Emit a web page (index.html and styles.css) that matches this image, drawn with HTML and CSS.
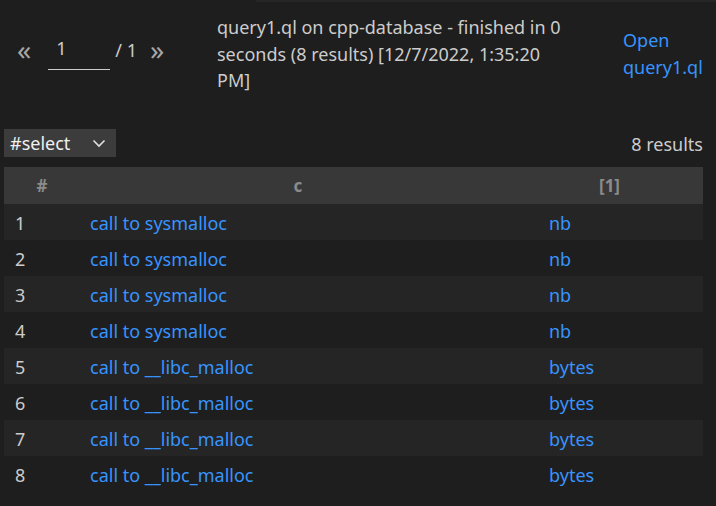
FILE: index.html
```html
<!DOCTYPE html>
<html>
<head>
<meta charset="utf-8">
<link rel="stylesheet" href="styles.css">
</head>
<body>
<div class="strip"></div>
<div class="top">
  <div class="pager">
    <span class="arrow">«</span>
    <span class="page-input">1</span>
    <span class="page-total">/ 1</span>
    <span class="arrow">»</span>
  </div>
  <div class="title">query1.ql on cpp-database - finished in 0 seconds (8 results) [12/7/2022, 1:35:20 PM]</div>
  <a class="open">Open query1.ql</a>
</div>
<div class="toolbar">
  <div class="select"><span>#select</span>
    <svg width="14" height="9" viewBox="0 0 14 9"><path d="M1.5 1.5 L7 7 L12.5 1.5" fill="none" stroke="#e0e0e0" stroke-width="1.6"/></svg>
  </div>
  <div class="count">8 results</div>
</div>
<div class="table">
  <div class="row head"><div>#</div><div>c</div><div>[1]</div></div>
  <div class="row odd"><div class="n">1</div><div class="l">call to sysmalloc</div><div class="r">nb</div></div>
  <div class="row"><div class="n">2</div><div class="l">call to sysmalloc</div><div class="r">nb</div></div>
  <div class="row odd"><div class="n">3</div><div class="l">call to sysmalloc</div><div class="r">nb</div></div>
  <div class="row"><div class="n">4</div><div class="l">call to sysmalloc</div><div class="r">nb</div></div>
  <div class="row odd"><div class="n">5</div><div class="l">call to __libc_malloc</div><div class="r">bytes</div></div>
  <div class="row"><div class="n">6</div><div class="l">call to __libc_malloc</div><div class="r">bytes</div></div>
  <div class="row odd"><div class="n">7</div><div class="l">call to __libc_malloc</div><div class="r">bytes</div></div>
  <div class="row"><div class="n">8</div><div class="l">call to __libc_malloc</div><div class="r">bytes</div></div>
</div>
</body>
</html>
```
FILE: styles.css
```css
html, body {
  margin: 0;
  padding: 0;
  background: #1e1e1e;
  color: #cccccc;
  font-family: "Noto Sans", "Open Sans", sans-serif;
  font-size: 18px;
}
.strip {
  height: 2px;
  margin-left: 256px;
  background: #262626;
}
.top {
  display: flex;
  align-items: flex-start;
  padding-top: 12px;
  height: 100px;
  box-sizing: content-box;
}
.pager {
  width: 200px;
  padding-left: 17px;
  display: flex;
  align-items: center;
  height: 72px;
}
.arrow {
  color: #a6a6a6;
  font-size: 28px;
  line-height: 28px;
  margin-top: -2px;
}
.page-input {
  width: 54px;
  margin-left: 17px;
  padding-left: 8px;
  padding-bottom: 10px;
  border-bottom: 1px solid #cccccc;
  line-height: 22px;
  margin-top: 23px;
  align-self: flex-start;
  color: #cccccc;
}
.page-total {
  margin-left: 5px;
  margin-right: 13px;
}
.title {
  width: 360px;
  line-height: 26.5px;
  color: #cccccc;
}
.open {
  margin-left: 46px;
  width: 90px;
  margin-top: 13px;
  line-height: 27px;
  color: #3794ff;
}
.toolbar {
  display: flex;
  justify-content: space-between;
  align-items: center;
  padding: 0 13px 0 4px;
  height: 28px;
  margin-top: 15px;
}
.select {
  width: 112px;
  height: 28px;
  box-sizing: border-box;
  background: #3c3c3c;
  color: #f0f0f0;
  display: flex;
  align-items: center;
  justify-content: space-between;
  padding: 0 10px 0 6px;
}
.count {
  color: #cccccc;
  padding-top: 1px;
}
.table {
  margin: 10px 13px 0 4px;
}
.row {
  display: grid;
  grid-template-columns: 76px 436px 187px;
  height: 36px;
  align-items: center;
  padding-top: 2px;
  box-sizing: border-box;
}
.row.odd {
  background: #252526;
}
.row.head {
  height: 37px;
  padding-top: 0;
  background: #383838;
  color: #8b8b8b;
  font-weight: bold;
  font-size: 17px;
  text-align: center;
}
.n {
  padding-left: 11px;
  color: #cccccc;
}
.l {
  padding-left: 10px;
  color: #3794ff;
}
.r {
  padding-left: 33px;
  color: #3794ff;
}
```
